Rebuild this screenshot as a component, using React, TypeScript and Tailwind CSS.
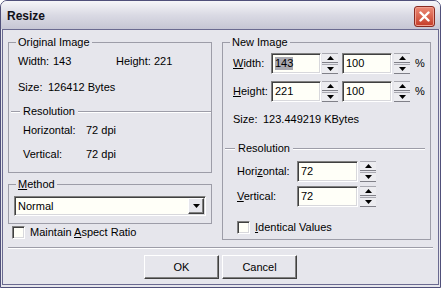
import React from 'react';

const sunken =
  'border border-t-[#808080] border-l-[#808080] border-b-white border-r-white shadow-[inset_1px_1px_0_#404040,inset_-1px_-1px_0_#d8d8dc] bg-[#fffff8]';
const raised =
  'border border-t-white border-l-white border-b-[#404040] border-r-[#404040] shadow-[inset_-1px_-1px_0_#808080] bg-[#e6e6ec]';

const Arrow = ({ down = false }: { down?: boolean }) => (
  <svg width="7" height="4" viewBox="0 0 7 4">
    <polygon points={down ? '0,0 7,0 3.5,4' : '0,4 7,4 3.5,0'} fill="#000" />
  </svg>
);

const Spin = () => (
  <div className="flex flex-col w-[16px] h-[21px] gap-[1px]">
    <div className="flex-1 flex items-center justify-center border-t border-t-[#a8a8b0] border-b border-b-[#808088] bg-[#ececf0]">
      <Arrow />
    </div>
    <div className="flex-1 flex items-center justify-center border-t border-t-[#a8a8b0] border-b border-b-[#808088] bg-[#ececf0]">
      <Arrow down />
    </div>
  </div>
);

const Input = ({ w, value, selected = false }: { w: string; value: string; selected?: boolean }) => (
  <div className={`${sunken} ${w} h-[21px] flex items-center pl-[3px]`}>
    <span className={selected ? 'bg-[#a9a9b0] leading-[13px]' : 'leading-[13px]'}>{value}</span>
  </div>
);

const Check = ({ children }: { children: React.ReactNode }) => (
  <div className="flex items-center h-[13px]">
    <div className={`${sunken} w-[13px] h-[13px]`} />
    <span className="ml-[5px]">{children}</span>
  </div>
);

const Sep = ({ label, lead, trail }: { label: string; lead: string; trail: string }) => (
  <div className="flex items-center h-[13px]">
    <div className={`${lead} border-t border-t-[#9d9da8] border-b border-b-white`} />
    <span className="px-[3px]">{label}</span>
    <div className={`flex-1 ${trail} border-t border-t-[#9d9da8] border-b border-b-white`} />
  </div>
);

const U = ({ children }: { children: React.ReactNode }) => <span className="underline underline-offset-1">{children}</span>;

export default function App() {
  return (
    <div className="w-[441px] h-[288px] flex flex-col bg-[#e6e6ec] text-[11px] text-black font-['Liberation_Sans',Arial,sans-serif] border border-[#50507a] rounded-t-[7px] overflow-hidden">
      <div className="h-[28px] flex items-center justify-between pl-[6px] pr-[5px] pt-[2px] bg-linear-to-b from-[#f6f6f9] via-[#dadae4] to-[#c6c6d4]">
        <span className="text-[12px] font-bold text-[#101018]">Resize</span>
        <div className="w-[21px] h-[21px] rounded-[3px] border border-[#8a2a20] bg-linear-to-b from-[#ec8a76] to-[#c43a26] flex items-center justify-center shadow-[inset_0_0_0_1px_#f0a090]">
          <svg width="11" height="11" viewBox="0 0 11 11">
            <path d="M1.5 1.5L9.5 9.5M9.5 1.5L1.5 9.5" stroke="#fff" strokeWidth="2.4" strokeLinecap="round" />
          </svg>
        </div>
      </div>

      <div className="flex-1 mx-[1px] mb-[2px] border border-[#6a6a90] pl-[5px] pr-[5px] pt-[6px] flex flex-col">
        <div className="flex gap-[10px]">
          <div className="w-[204px] flex flex-col">
            <fieldset className="border border-[#9d9da8] pb-[11px]">
              <legend className="ml-[7px] px-[2px] leading-[12px]">Original Image</legend>
              <div className="h-[27px] flex items-center pl-[9px]">
                <span className="w-[35px]">Width:</span>
                <span className="w-[63px]">143</span>
                <span className="w-[38px]">Height:</span>
                <span>221</span>
              </div>
              <div className="h-[24px] flex items-center pl-[9px]">
                <span className="w-[30px]">Size:</span>
                <span>126412 Bytes</span>
              </div>
              <div className="h-[25px] flex items-center">
                <div className="w-full">
                  <Sep label="Resolution" lead="ml-[2px] w-[9px]" trail="" />
                </div>
              </div>
              <div className="h-[13px] flex items-center pl-[14px]">
                <span className="w-[63px]">Horizontal:</span>
                <span>72 dpi</span>
              </div>
              <div className="mt-[11px] h-[13px] flex items-center pl-[14px]">
                <span className="w-[63px]">Vertical:</span>
                <span>72 dpi</span>
              </div>
            </fieldset>

            <fieldset className="mt-[5px] border border-[#9d9da8] pb-[7px]">
              <legend className="ml-[7px] px-[2px] leading-[12px]">
                <U>M</U>ethod
              </legend>
              <div className={`${sunken} mt-[6px] mx-[5px] h-[20px] flex items-center justify-between pl-[3px] pr-[1px]`}>
                <span>Normal</span>
                <div className={`${raised} w-[16px] h-[16px] flex items-center justify-center`}>
                  <Arrow down />
                </div>
              </div>
            </fieldset>

            <div className="mt-[2px] pl-[4px]">
              <Check>
                Maintain <U>A</U>spect Ratio
              </Check>
            </div>
          </div>

          <fieldset className="w-[209px] border border-[#9d9da8] pb-[5px]">
            <legend className="ml-[7px] px-[2px] leading-[12px]">New Image</legend>
            <div className="mt-[5px] flex items-center pl-[10px]">
              <span className="w-[38px]">
                <U>W</U>idth:
              </span>
              <Input w="w-[50px]" value="143" selected />
              <div className="ml-[1px]"><Spin /></div>
              <div className="ml-[4px]"><Input w="w-[50px]" value="100" /></div>
              <div className="ml-[2px]"><Spin /></div>
              <span className="ml-[5px]">%</span>
            </div>
            <div className="mt-[7px] flex items-center pl-[10px]">
              <span className="w-[38px]">
                <U>H</U>eight:
              </span>
              <Input w="w-[50px]" value="221" />
              <div className="ml-[1px]"><Spin /></div>
              <div className="ml-[4px]"><Input w="w-[50px]" value="100" /></div>
              <div className="ml-[2px]"><Spin /></div>
              <span className="ml-[5px]">%</span>
            </div>
            <div className="mt-[11px] h-[13px] flex items-center pl-[10px]">
              <span className="w-[30px]">Size:</span>
              <span>123.449219 KBytes</span>
            </div>
            <div className="mt-[16px]">
              <Sep label="Resolution" lead="ml-[2px] w-[10px]" trail="mr-[5px]" />
            </div>
            <div className="mt-[6px] flex items-center pl-[14px]">
              <span className="w-[60px]">
                Hori<U>z</U>ontal:
              </span>
              <Input w="w-[61px]" value="72" />
              <div className="ml-[2px]"><Spin /></div>
            </div>
            <div className="mt-[4px] flex items-center pl-[14px]">
              <span className="w-[60px]">
                <U>V</U>ertical:
              </span>
              <Input w="w-[61px]" value="72" />
              <div className="ml-[2px]"><Spin /></div>
            </div>
            <div className="mt-[14px] pl-[14px]">
              <Check>
                <U>I</U>dentical Values
              </Check>
            </div>
          </fieldset>
        </div>

        <div className="mt-[7px] border-t border-t-[#9d9da8] border-b border-b-white" />

        <div className="mt-[6px] flex justify-center gap-[3px]">
          <button className={`${raised} w-[75px] h-[24px]`}>OK</button>
          <button className={`${raised} w-[75px] h-[24px]`}>Cancel</button>
        </div>
      </div>
    </div>
  );
}
